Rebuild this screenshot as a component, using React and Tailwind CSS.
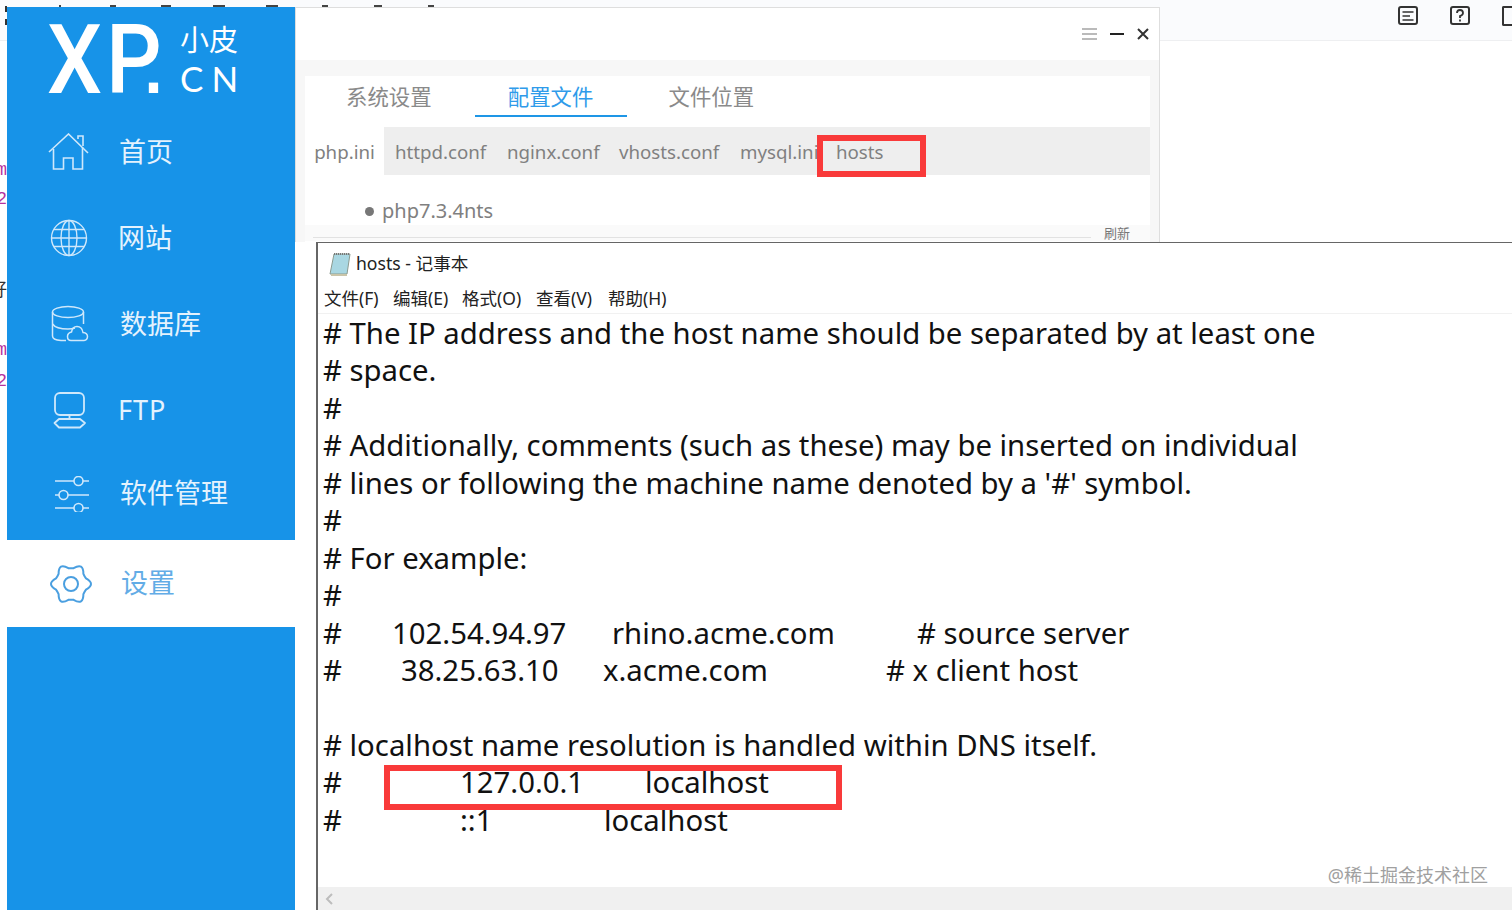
import React from "react";

const font = { fontFamily: '"Noto Sans", "Noto Sans CJK SC", sans-serif' };

const gearPath = () => {
  // six round lobes around the centre
  const cx = 22;
  const cy = 22;
  let d = "";
  for (let i = 0; i < 6; i++) {
    const a = (i * Math.PI) / 3;
    const b = a + Math.PI / 6;
    const c = a + Math.PI / 3;
    const p1 = [cx + 16 * Math.cos(a - 0.36), cy + 16 * Math.sin(a - 0.36)];
    const tip = [cx + 25 * Math.cos(a), cy + 25 * Math.sin(a)];
    const p2 = [cx + 16 * Math.cos(a + 0.36), cy + 16 * Math.sin(a + 0.36)];
    const notch = [cx + 15.5 * Math.cos(b), cy + 15.5 * Math.sin(b)];
    const p3 = [cx + 16 * Math.cos(c - 0.36), cy + 16 * Math.sin(c - 0.36)];
    d += `${i === 0 ? "M" : "L"}${p1[0].toFixed(1)} ${p1[1].toFixed(1)} `;
    d += `Q${tip[0].toFixed(1)} ${tip[1].toFixed(1)} ${p2[0].toFixed(1)} ${p2[1].toFixed(1)} `;
    d += `Q${notch[0].toFixed(1)} ${notch[1].toFixed(1)} ${p3[0].toFixed(1)} ${p3[1].toFixed(1)} `;
  }
  return d + "Z";
};

const HomeIcon = () => (
  <svg width="42" height="38" viewBox="0 0 42 38" fill="none" stroke="#cfe8fb" strokeWidth="1.6">
    <path d="M1 19 L20.5 1 L40 20" />
    <path d="M30 6 V3 H35 V13" />
    <path d="M5.5 16 V36 H15.5 V25 H25 V36 H34.500 V14" />
  </svg>
);

const GlobeIcon = () => (
  <svg width="38" height="38" viewBox="0 0 38 38" fill="none" stroke="#cfe8fb" strokeWidth="1.4">
    <circle cx="19" cy="19" r="17.500" />
    <ellipse cx="19" cy="19" rx="8" ry="17.500" />
    <path d="M19 1.500 V36.500 M1.500 19 H36.500 M4 10.500 H34 M4 27.500 H34" />
  </svg>
);

const DbIcon = () => (
  <svg width="38" height="38" viewBox="0 0 38 38" fill="none" stroke="#cfe8fb" strokeWidth="1.5">
    <ellipse cx="17" cy="7" rx="15.500" ry="5.500" />
    <path d="M1.500 7 V31 Q1.500 35 10 35.500 H15" />
    <path d="M32.500 7 V19" />
    <path d="M1.500 19 Q5 24 17 24 Q21 24 24 23" />
    <path d="M20 35.500 H33 Q36.500 35 36.500 31.500 Q36.500 28 32 27.500 Q31 21.500 26 21.500 Q21.500 21.500 20.500 27 Q16.500 28 16.500 31.500 Q16.500 35.500 20 35.500 Z" />
  </svg>
);

const FtpIcon = () => (
  <svg width="34" height="38" viewBox="0 0 34 38" fill="none" stroke="#cfe8fb" strokeWidth="1.8">
    <rect x="2" y="2" width="29" height="22" rx="5" />
    <path d="M16.500 24 V28" />
    <path d="M6 28 H27 L32 32 L27 36.500 H6 L1.500 32 Z" strokeLinejoin="round" />
  </svg>
);

const SlidersIcon = () => (
  <svg width="36" height="36" viewBox="0 0 36 36" fill="none" stroke="#cfe8fb" strokeWidth="1.6">
    <path d="M1 5 H20 M29 5 H35 M1 19 H5 M14 19 H35 M1 32 H20 M29 32 H35" />
    <circle cx="24.500" cy="5" r="4.500" />
    <circle cx="9.500" cy="19" r="4.500" />
    <circle cx="24.500" cy="32" r="4.500" />
  </svg>
);

const GearIcon = () => (
  <svg width="44" height="44" viewBox="0 0 44 44" fill="none" stroke="#4a9fe0" strokeWidth="2">
    <path d={gearPath()} />
    <circle cx="22" cy="22" r="7" />
  </svg>
);

const navItems = [
  { label: "首页", icon: <HomeIcon />, box: "h-[86px] pl-[41px]", text: "ml-[29px]" },
  { label: "网站", icon: <GlobeIcon />, box: "h-[86px] pl-[43px]", text: "ml-[30px]" },
  { label: "数据库", icon: <DbIcon />, box: "h-[86px] pl-[44px]", text: "ml-[31px]" },
  { label: "FTP", icon: <FtpIcon />, box: "h-[86px] pl-[46px]", text: "ml-[31px] tracking-[1px]" },
  { label: "软件管理", icon: <SlidersIcon />, box: "h-[87px] pb-[6px] pl-[47px]", text: "ml-[30px]" },
];

const Sidebar = () => (
  <aside className="absolute left-[7px] top-[7px] w-[288px] h-[903px] bg-[#1793e8] flex flex-col" style={font}>
    {/* Logo */}
    <div className="h-[102px] flex pl-[40px] text-white">
      <div className="w-[133px] flex items-baseline text-[97px] leading-[97px] mt-[4px] font-medium" style={{ fontFamily: "Roboto, sans-serif" }}>
        <span className="inline-block w-[59px] origin-left scale-x-90">X</span>
        <span className="inline-block w-[34px] origin-left scale-x-90">P</span>
        <span style={{ fontFamily: '"Liberation Sans", sans-serif' }}>.</span>
      </div>
      <div className="pt-[15px] flex flex-col">
        <span className="text-[29px] leading-[36px]">小皮</span>
        <span className="text-[35px] leading-[40px] tracking-[8px]" style={{ fontFamily: "Lato, sans-serif" }}>CN</span>
      </div>
    </div>
    {/* Nav */}
    <nav className="flex flex-col">
      {navItems.map((item) => (
        <div key={item.label} className={`flex items-center ${item.box}`}>
          <div className="shrink-0">{item.icon}</div>
          <span className={`text-[27px] text-[#e4f2fd] ${item.text}`}>{item.label}</span>
        </div>
      ))}
      <div className="h-[87px] bg-white flex items-center pl-[42px]">
        <GearIcon />
        <span className="text-[27px] text-[#62ace6] ml-[28px]">设置</span>
      </div>
    </nav>
  </aside>
);

const subTabs = [
  { label: "httpd.conf", w: "w-[112px]" },
  { label: "nginx.conf", w: "w-[112px]" },
  { label: "vhosts.conf", w: "w-[121px]" },
  { label: "mysql.ini", w: "w-[96px]" },
];

const SettingsWindow = () => (
  <section className="absolute left-[295px] top-[7px] w-[865px] h-[235px] bg-[#f7f7f7] border border-b-0 border-[#dedede] flex flex-col" style={font}>
    <div className="h-[52px] bg-white flex items-center justify-end gap-[13px] pr-[10px] shrink-0">
      <svg width="15" height="12" viewBox="0 0 15 12" stroke="#777" strokeWidth="1.200">
        <path d="M0 1 H15 M0 6 H15 M0 11 H15" />
      </svg>
      <svg width="14" height="12" viewBox="0 0 14 12" stroke="#222" strokeWidth="2">
        <path d="M0 6 H14" />
      </svg>
      <svg width="12" height="12" viewBox="0 0 12 12" stroke="#333" strokeWidth="2">
        <path d="M1 1 L11 11 M11 1 L1 11" />
      </svg>
    </div>
    <div className="mx-[9px] mt-[16px] flex flex-col flex-1 bg-white">
      {/* Main tabs */}
      <div className="h-[51px] flex items-start text-[21.4px] text-[#8a8a8a] shrink-0">
        <span className="ml-[41px] mt-[5px] leading-[32px]">系统设置</span>
        <span className="ml-[43px] w-[152px] h-[41px] border-b-2 border-[#1e96e6] text-[#2f9bea] text-center pt-[5px] leading-[32px]">配置文件</span>
        <span className="ml-[42px] mt-[5px] leading-[32px]">文件位置</span>
      </div>
      {/* File tabs */}
      <div className="h-[48px] bg-[#eeeeee] flex items-center text-[18.7px] text-[#808080] shrink-0">
        <span className="h-full w-[79px] bg-white flex items-center justify-center pt-[2px]">php.ini</span>
        <div className="flex pl-[11px] pt-[2px]">
          {subTabs.map((tab) => (
            <span key={tab.label} className={tab.w}>{tab.label}</span>
          ))}
          <span>hosts</span>
        </div>
      </div>
      <div className="pl-[60px] pt-[22px] flex items-center text-[20px] text-[#808080] leading-[28px]">
        <span className="w-[9px] h-[9px] rounded-full bg-[#777] mr-[8px]"></span>
        php7.3.4nts
      </div>
      <div className="h-[16px] flex bg-[#fafafa] pl-[8px] pr-[20px]">
        <div className="flex-1 h-px bg-[#e2e2e2] mt-[12px] mr-[13px]"></div>
        <span className="text-[13px] leading-[16px] text-[#777]">刷新</span>
      </div>
    </div>
  </section>
);

const Line = ({ children }) => <div className="h-[37.46px] leading-[37.46px] whitespace-pre">{children}</div>;

const Col = ({ w, children }) => <span className={`inline-block ${w}`}>{children}</span>;

const NotepadIcon = () => (
  <svg width="22" height="24" viewBox="0 0 22 24">
    <path d="M5 2 H21 L18 22 H1 Z" fill="#a9d7e2" stroke="#8b9a8f" strokeWidth="1" />
    <path d="M5 2 H21" stroke="#777" strokeWidth="2" strokeDasharray="1 1" />
    <path d="M2 23 H18" stroke="#c9c4a8" strokeWidth="2" />
  </svg>
);

const Notepad = () => (
  <section className="absolute left-[316px] top-[242px] w-[1196px] h-[668px] bg-white border-l-2 border-t border-[#666] flex flex-col" style={font}>
    <div className="h-[41px] flex items-center pl-[11px] text-[17.6px] text-[#222] shrink-0">
      <NotepadIcon />
      <span className="ml-[5px]">hosts - 记事本</span>
    </div>
    <div className="h-[30px] flex items-center text-[17.5px] text-[#222] pl-[6px] border-b border-[#f1f1f1] shrink-0">
      <span className="w-[69px]">文件(F)</span>
      <span className="w-[69px]">编辑(E)</span>
      <span className="w-[74px]">格式(O)</span>
      <span className="w-[72px]">查看(V)</span>
      <span>帮助(H)</span>
    </div>
    <div className="flex-1 pl-[5px] pt-[1px] text-[29.3px] text-[#111] overflow-hidden">
      <Line># The IP address and the host name should be separated by at least one</Line>
      <Line># space.</Line>
      <Line>#</Line>
      <Line># Additionally, comments (such as these) may be inserted on individual</Line>
      <Line># lines or following the machine name denoted by a '#' symbol.</Line>
      <Line>#</Line>
      <Line># For example:</Line>
      <Line>#</Line>
      <Line>
        <Col w="w-[69px]">#</Col>
        <Col w="w-[220px]">102.54.94.97</Col>
        <Col w="w-[305px]">rhino.acme.com</Col>
        # source server
      </Line>
      <Line>
        <Col w="w-[78px]">#</Col>
        <Col w="w-[202px]">38.25.63.10</Col>
        <Col w="w-[283px]">x.acme.com</Col>
        # x client host
      </Line>
      <Line> </Line>
      <Line># localhost name resolution is handled within DNS itself.</Line>
      <Line>
        <Col w="w-[137px]">#</Col>
        <Col w="w-[185px]">127.0.0.1</Col>
        localhost
      </Line>
      <Line>
        <Col w="w-[137px]">#</Col>
        <Col w="w-[144px]">::1</Col>
        localhost
      </Line>
    </div>
    <div className="h-[23px] bg-[#f0f0f0] flex items-center pl-[7px] shrink-0">
      <svg width="8" height="12" viewBox="0 0 8 12" fill="none" stroke="#bdbdbd" strokeWidth="2">
        <path d="M7 1 L2 6 L7 11" />
      </svg>
    </div>
    {/* watermark sits over the page */}
    <span className="absolute right-[24px] bottom-[23px] text-[18px] leading-[24px] text-[#a0a0a0]">@稀土掘金技术社区</span>
  </section>
);

// tops of the toolbar icons that peek out above the windows
const peeks = ["w-[2px]", "w-[6px]", "w-[10px]", "w-[12px]", "w-[12px]", "w-[6px]", "w-[8px]", "w-[6px]"];

const Background = () => (
  <div className="absolute inset-0 flex flex-col" style={font}>
    <div className="h-[41px] bg-[#fafbfd] border-b border-[#eeeff1] flex items-start justify-end pt-[6px] gap-[31px] shrink-0">
      <svg width="21" height="20" viewBox="0 0 21 20" fill="none" stroke="#333" strokeWidth="2">
        <rect x="1" y="1" width="18" height="17" rx="2" />
        <path d="M4.500 6 H15.500 M4.500 10 H12 M4.500 14 H15.500" strokeWidth="1.500" />
      </svg>
      <svg width="21" height="20" viewBox="0 0 21 20" fill="none" stroke="#333" strokeWidth="2">
        <rect x="1" y="1" width="18" height="17" rx="2" />
        <path d="M7 7 Q7 4 10 4 Q13 4 13 7 Q13 9 10 10 V12 M10 13.500 V15.500" strokeWidth="1.800" />
      </svg>
      <div className="w-[10px] h-[20px] border-2 border-r-0 border-[#333] rounded-l-[2px]"></div>
    </div>
    <div className="absolute left-[33px] top-[5px] flex">
      {peeks.map((w, i) => (
        <div key={i} className="w-[53px] flex justify-center">
          <div className={`h-[2px] bg-[#444] ${w}`}></div>
        </div>
      ))}
    </div>
    <div className="absolute left-[5px] top-[6px] h-[19px] border-l-2 border-dashed border-[#333]"></div>
    {/* bits of the editor behind the windows */}
    <div className="absolute left-0 top-[160px] w-[7px] overflow-hidden flex flex-col items-end text-[18px] leading-[20px] text-[#b5329f]" style={{ fontFamily: '"Liberation Mono", monospace' }}>
      <span className="shrink-0">m</span>
      <span className="mt-[9px] shrink-0">2</span>
      <span className="mt-[69px] text-[#333] shrink-0" style={{ fontFamily: '"Noto Sans CJK SC", sans-serif' }}>好</span>
      <span className="mt-[42px] shrink-0">m</span>
      <span className="mt-[11px] shrink-0">2</span>
    </div>
  </div>
);

const RedBox = ({ className }) => <div className={`absolute border-[6px] border-[#f93a3a] ${className}`}></div>;

export default function App() {
  return (
    <div className="relative w-[1512px] h-[910px] overflow-hidden bg-white">
      <Background />
      <Sidebar />
      <SettingsWindow />
      <Notepad />
      <RedBox className="left-[817px] top-[135px] w-[109px] h-[42px]" />
      <RedBox className="left-[384px] top-[765px] w-[458px] h-[45px]" />
    </div>
  );
}
